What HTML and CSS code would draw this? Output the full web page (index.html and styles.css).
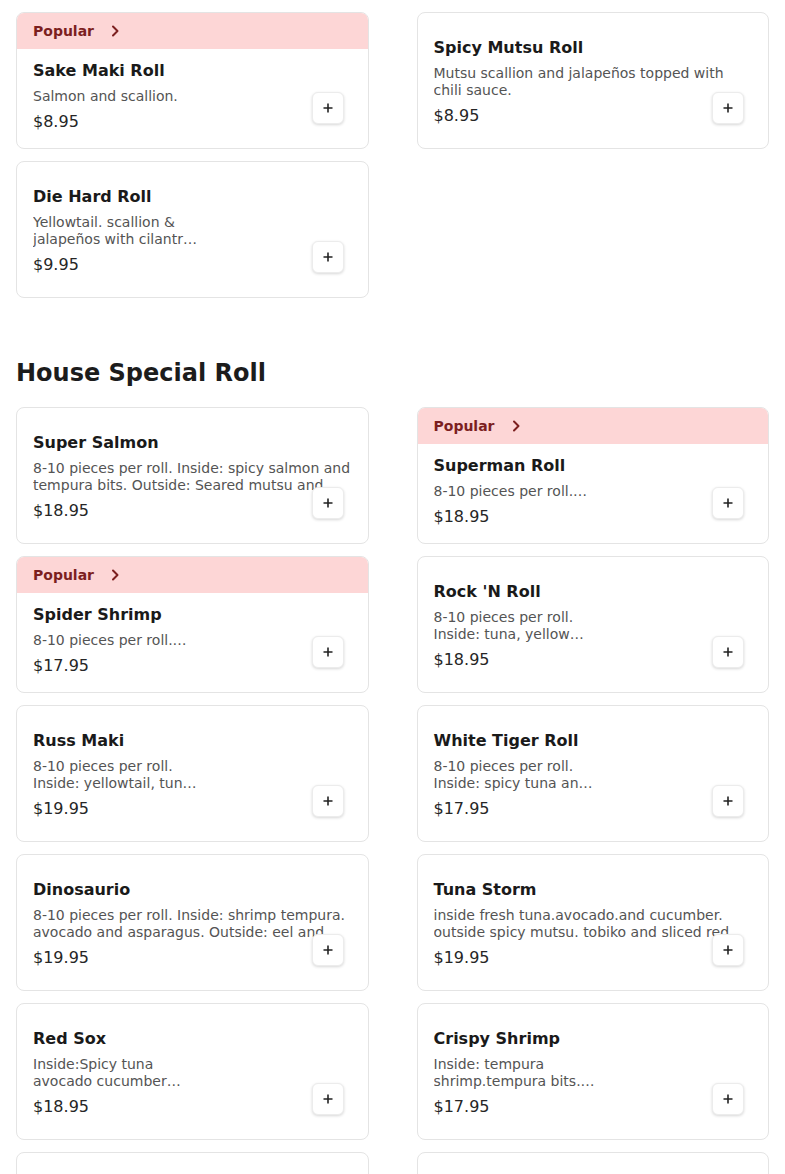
FILE: index.html
```html
<!DOCTYPE html>
<html lang="en">
<head>
<meta charset="utf-8">
<title>Menu</title>
<link rel="stylesheet" href="styles.css">
</head>
<body>
<main class="menu">
  <section class="section section-first">
    <div class="grid">
      <article class="card">
        <div class="banner"><span>Popular</span><svg class="chev" width="10" height="12" viewBox="0 0 10 12"><path d="M3 1.5 L7.5 6 L3 10.5" fill="none" stroke="currentColor" stroke-width="2" stroke-linecap="round" stroke-linejoin="round"/></svg></div>
        <div class="body body-b">
          <h3 class="title">Sake Maki Roll</h3>
          <p class="desc">Salmon and scallion.</p>
          <div class="price">$8.95</div>
        </div>
        <button class="add" aria-label="Add"><svg width="12" height="12" viewBox="0 0 12 12"><path d="M6 1.5 V10.5 M1.5 6 H10.5" stroke="currentColor" stroke-width="1.6"/></svg></button>
      </article>
      <article class="card">
        <div class="body">
          <h3 class="title">Spicy Mutsu Roll</h3>
          <p class="desc">Mutsu scallion and jalapeños topped with chili sauce.</p>
          <div class="price">$8.95</div>
        </div>
        <button class="add" aria-label="Add"><svg width="12" height="12" viewBox="0 0 12 12"><path d="M6 1.5 V10.5 M1.5 6 H10.5" stroke="currentColor" stroke-width="1.6"/></svg></button>
      </article>
      <article class="card">
        <div class="body">
          <h3 class="title">Die Hard Roll</h3>
          <p class="desc">Yellowtail. scallion &amp;<br>jalapeños with cilantr…</p>
          <div class="price">$9.95</div>
        </div>
        <button class="add" aria-label="Add"><svg width="12" height="12" viewBox="0 0 12 12"><path d="M6 1.5 V10.5 M1.5 6 H10.5" stroke="currentColor" stroke-width="1.6"/></svg></button>
      </article>
    </div>
  </section>

  <section class="section">
    <h2 class="section-title">House Special Roll</h2>
    <div class="grid">
      <article class="card">
        <div class="body">
          <h3 class="title">Super Salmon</h3>
          <p class="desc">8-10 pieces per roll. Inside: spicy salmon and tempura bits. Outside: Seared mutsu and spicy mayo with eel sauce.</p>
          <div class="price">$18.95</div>
        </div>
        <button class="add" aria-label="Add"><svg width="12" height="12" viewBox="0 0 12 12"><path d="M6 1.5 V10.5 M1.5 6 H10.5" stroke="currentColor" stroke-width="1.6"/></svg></button>
      </article>
      <article class="card">
        <div class="banner"><span>Popular</span><svg class="chev" width="10" height="12" viewBox="0 0 10 12"><path d="M3 1.5 L7.5 6 L3 10.5" fill="none" stroke="currentColor" stroke-width="2" stroke-linecap="round" stroke-linejoin="round"/></svg></div>
        <div class="body body-b">
          <h3 class="title">Superman Roll</h3>
          <p class="desc">8-10 pieces per roll.…</p>
          <div class="price">$18.95</div>
        </div>
        <button class="add" aria-label="Add"><svg width="12" height="12" viewBox="0 0 12 12"><path d="M6 1.5 V10.5 M1.5 6 H10.5" stroke="currentColor" stroke-width="1.6"/></svg></button>
      </article>
      <article class="card">
        <div class="banner"><span>Popular</span><svg class="chev" width="10" height="12" viewBox="0 0 10 12"><path d="M3 1.5 L7.5 6 L3 10.5" fill="none" stroke="currentColor" stroke-width="2" stroke-linecap="round" stroke-linejoin="round"/></svg></div>
        <div class="body body-b">
          <h3 class="title">Spider Shrimp</h3>
          <p class="desc">8-10 pieces per roll.…</p>
          <div class="price">$17.95</div>
        </div>
        <button class="add" aria-label="Add"><svg width="12" height="12" viewBox="0 0 12 12"><path d="M6 1.5 V10.5 M1.5 6 H10.5" stroke="currentColor" stroke-width="1.6"/></svg></button>
      </article>
      <article class="card">
        <div class="body">
          <h3 class="title">Rock 'N Roll</h3>
          <p class="desc">8-10 pieces per roll.<br>Inside: tuna, yellow…</p>
          <div class="price">$18.95</div>
        </div>
        <button class="add" aria-label="Add"><svg width="12" height="12" viewBox="0 0 12 12"><path d="M6 1.5 V10.5 M1.5 6 H10.5" stroke="currentColor" stroke-width="1.6"/></svg></button>
      </article>
      <article class="card">
        <div class="body">
          <h3 class="title">Russ Maki</h3>
          <p class="desc">8-10 pieces per roll.<br>Inside: yellowtail, tun…</p>
          <div class="price">$19.95</div>
        </div>
        <button class="add" aria-label="Add"><svg width="12" height="12" viewBox="0 0 12 12"><path d="M6 1.5 V10.5 M1.5 6 H10.5" stroke="currentColor" stroke-width="1.6"/></svg></button>
      </article>
      <article class="card">
        <div class="body">
          <h3 class="title">White Tiger Roll</h3>
          <p class="desc">8-10 pieces per roll.<br>Inside: spicy tuna an…</p>
          <div class="price">$17.95</div>
        </div>
        <button class="add" aria-label="Add"><svg width="12" height="12" viewBox="0 0 12 12"><path d="M6 1.5 V10.5 M1.5 6 H10.5" stroke="currentColor" stroke-width="1.6"/></svg></button>
      </article>
      <article class="card">
        <div class="body">
          <h3 class="title">Dinosaurio</h3>
          <p class="desc">8-10 pieces per roll. Inside: shrimp tempura. avocado and asparagus. Outside: eel and avocado with eel sauce.</p>
          <div class="price">$19.95</div>
        </div>
        <button class="add" aria-label="Add"><svg width="12" height="12" viewBox="0 0 12 12"><path d="M6 1.5 V10.5 M1.5 6 H10.5" stroke="currentColor" stroke-width="1.6"/></svg></button>
      </article>
      <article class="card">
        <div class="body">
          <h3 class="title">Tuna Storm</h3>
          <p class="desc">inside fresh tuna.avocado.and cucumber. outside spicy mutsu. tobiko and sliced red onion.</p>
          <div class="price">$19.95</div>
        </div>
        <button class="add" aria-label="Add"><svg width="12" height="12" viewBox="0 0 12 12"><path d="M6 1.5 V10.5 M1.5 6 H10.5" stroke="currentColor" stroke-width="1.6"/></svg></button>
      </article>
      <article class="card">
        <div class="body">
          <h3 class="title">Red Sox</h3>
          <p class="desc">Inside:Spicy tuna<br>avocado cucumber…</p>
          <div class="price">$18.95</div>
        </div>
        <button class="add" aria-label="Add"><svg width="12" height="12" viewBox="0 0 12 12"><path d="M6 1.5 V10.5 M1.5 6 H10.5" stroke="currentColor" stroke-width="1.6"/></svg></button>
      </article>
      <article class="card">
        <div class="body">
          <h3 class="title">Crispy Shrimp</h3>
          <p class="desc">Inside: tempura<br>shrimp.tempura bits.…</p>
          <div class="price">$17.95</div>
        </div>
        <button class="add" aria-label="Add"><svg width="12" height="12" viewBox="0 0 12 12"><path d="M6 1.5 V10.5 M1.5 6 H10.5" stroke="currentColor" stroke-width="1.6"/></svg></button>
      </article>
      <article class="card">
        <div class="body">
          <h3 class="title">Rainbow Roll</h3>
          <p class="desc">8-10 pieces per roll.<br>Inside: crab, avocado…</p>
          <div class="price">$17.95</div>
        </div>
        <button class="add" aria-label="Add"><svg width="12" height="12" viewBox="0 0 12 12"><path d="M6 1.5 V10.5 M1.5 6 H10.5" stroke="currentColor" stroke-width="1.6"/></svg></button>
      </article>
      <article class="card">
        <div class="body">
          <h3 class="title">Volcano Roll</h3>
          <p class="desc">8-10 pieces per roll.<br>Inside: spicy crab…</p>
          <div class="price">$18.95</div>
        </div>
        <button class="add" aria-label="Add"><svg width="12" height="12" viewBox="0 0 12 12"><path d="M6 1.5 V10.5 M1.5 6 H10.5" stroke="currentColor" stroke-width="1.6"/></svg></button>
      </article>
    </div>
  </section>
</main>
</body>
</html>
```

FILE: styles.css
```css
* { box-sizing: border-box; }

html, body {
  margin: 0;
  padding: 0;
  background: #ffffff;
}

body {
  font-family: "DejaVu Sans", "Liberation Sans", sans-serif;
  color: #1c1c1c;
}

.menu {
  padding: 12px 16px 0;
}

.section + .section {
  margin-top: 59px;
}

.section-title {
  margin: 0 0 18px;
  font-size: 24px;
  line-height: 32px;
  font-weight: 700;
  color: #1c1c1c;
}

.grid {
  display: grid;
  grid-template-columns: 1fr 1fr;
  grid-auto-rows: 1fr;
  column-gap: 48px;
  row-gap: 12px;
}

.card {
  position: relative;
  display: flex;
  flex-direction: column;
  border: 1px solid #e4e4e4;
  border-radius: 8px;
  overflow: hidden;
  background: #fff;
}

.banner {
  display: flex;
  align-items: center;
  gap: 16px;
  padding: 8px 16px;
  background: #fdd6d6;
  color: #7c1f1f;
  font-size: 14px;
  line-height: 20px;
  font-weight: 700;
}

.chev { display: block; }

.body {
  flex: 1;
  display: flex;
  flex-direction: column;
  justify-content: center;
  padding: 17.5px 16px 14.5px;
}

.body-b {
  justify-content: flex-start;
  padding: 9.5px 16px 14.5px;
}

.title {
  margin: 0 0 5px;
  font-size: 16px;
  line-height: 24px;
  font-weight: 700;
  color: #1a1a1a;
}

.desc {
  margin: 0 0 5px;
  font-size: 14px;
  line-height: 17px;
  max-height: 34px;
  overflow: hidden;
  color: #545454;
}

.price {
  font-size: 16px;
  line-height: 24px;
  color: #262626;
}

.add {
  position: absolute;
  right: 24px;
  bottom: 24px;
  width: 32px;
  height: 32px;
  padding: 0;
  display: flex;
  align-items: center;
  justify-content: center;
  background: #fff;
  color: #222;
  border: 1px solid #ececec;
  border-radius: 6px;
  box-shadow: 0 1px 3px rgba(0, 0, 0, 0.16);
  cursor: pointer;
}

.add svg { display: block; }
```
